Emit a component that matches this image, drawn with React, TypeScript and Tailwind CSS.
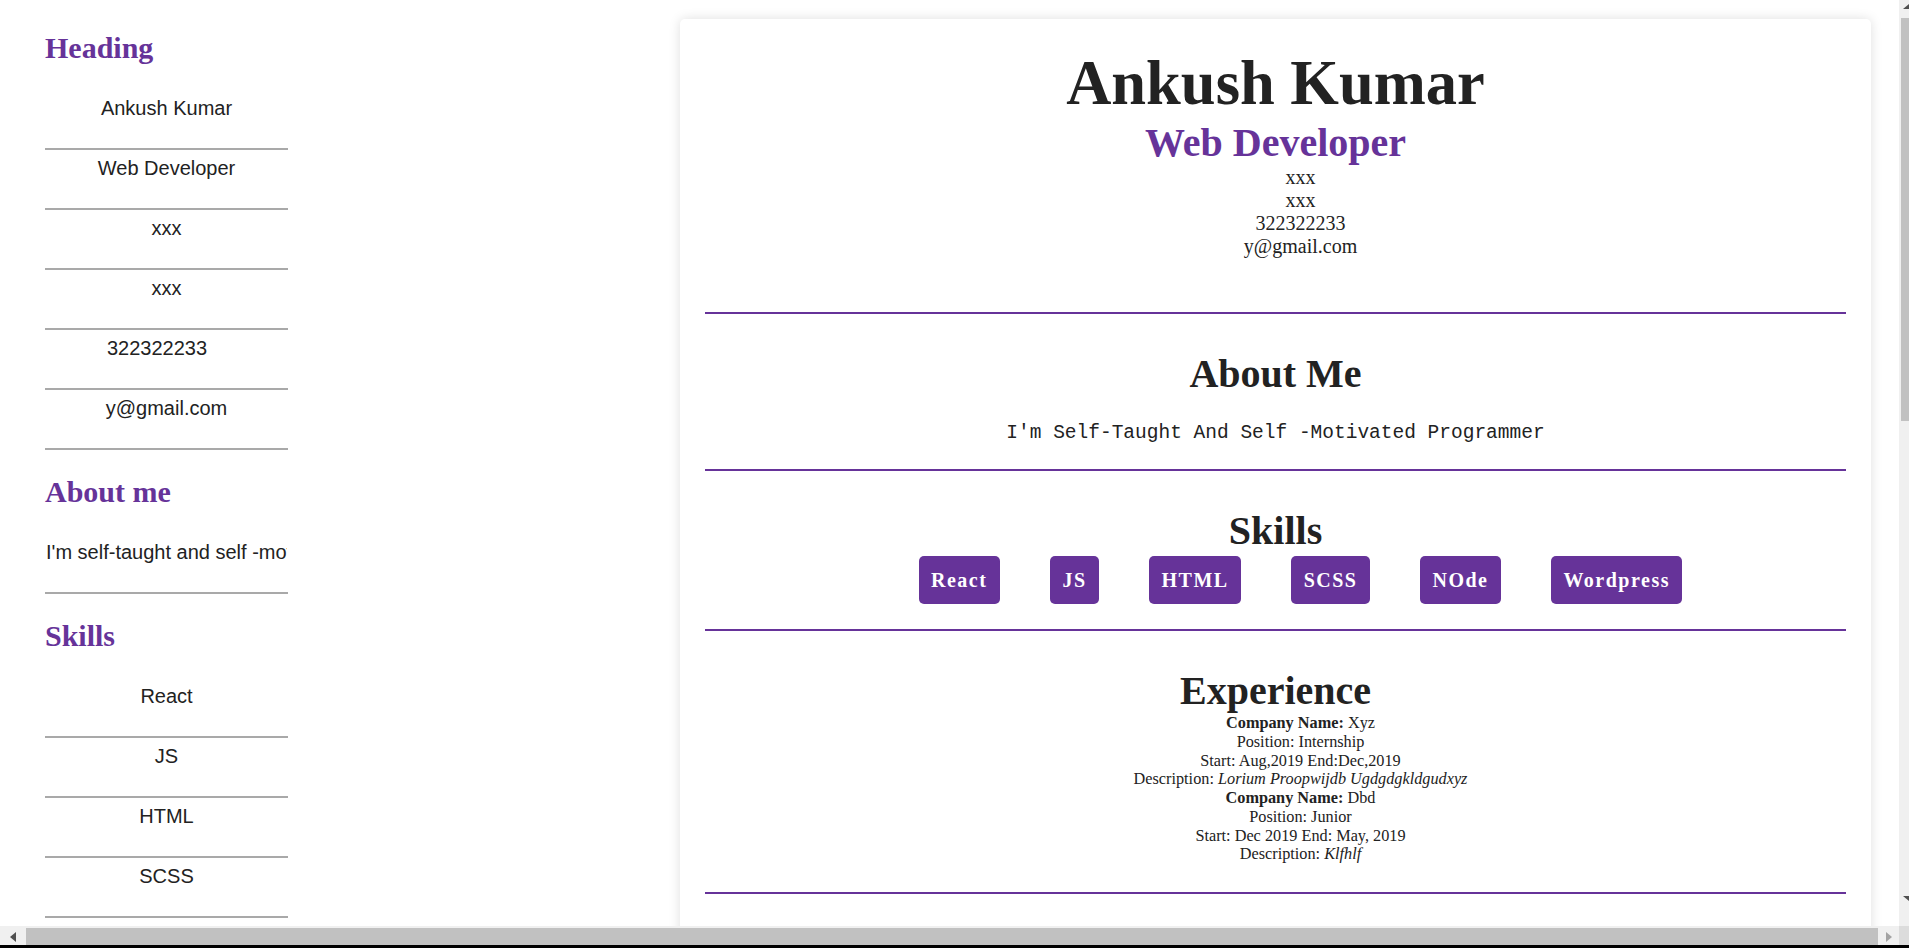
import React from "react";

const serif = { fontFamily: '"Liberation Serif", "Times New Roman", serif' };

const CONTACT = ["Ankush Kumar", "Web Developer", "xxx", "xxx", "322322233", "y@gmail.com"];
const SKILLS = ["React", "JS", "HTML", "SCSS", "NOde", "Wordpress"];

function SideHeading({ children }: { children: React.ReactNode }) {
  return (
    <h2 className="mt-[25px] mb-[25px] text-[30px] leading-[34px] font-bold text-[#663399] first:mt-0 font-['Liberation_Serif',serif]">
      {children}
    </h2>
  );
}

function Field({ value, shift }: { value: string; shift?: boolean }) {
  return (
    <input
      readOnly
      value={value}
      className={
        "block w-full h-[60px] pt-[7px] pb-[28px] border-0 border-b-2 border-[#a9a9a9] bg-transparent text-center text-[20px] leading-[23px] text-[#222] outline-none font-['Liberation_Sans',Arial,sans-serif] " +
        (shift ? "pl-0 pr-[19px]" : "px-[1px]")
      }
    />
  );
}

function Section({ title, children, pb = "pb-[25px]" }: { title: string; children: React.ReactNode; pb?: string }) {
  return (
    <>
      <div className={"pt-[37px] text-center " + pb}>
        <h2 className="text-[40px] leading-[46px] font-bold text-[#222]">{title}</h2>
        {children}
      </div>
      <div className="h-[2px] bg-[#663399]" />
    </>
  );
}

function Resume() {
  return (
    <div
      className="ml-[392px] mt-[19px] w-[1191px] shrink-0 rounded-[5px] bg-white px-[25px] pb-[200px] shadow-[0_0_12px_rgba(0,0,0,0.13)]"
      style={serif}
    >
      <div className="pt-[28px] pb-[54px] text-center text-[#222]">
        <h1 className="text-[62.5px] leading-[73px] font-bold">Ankush Kumar</h1>
        <h2 className="text-[40px] leading-[46px] font-bold text-[#663399]">Web Developer</h2>
        <ul className="pl-[50px] text-[20px] leading-[23px]">
          <li>xxx</li>
          <li>xxx</li>
          <li>322322233</li>
          <li>y@gmail.com</li>
        </ul>
      </div>
      <div className="h-[2px] bg-[#663399]" />

      <Section title="About Me">
        <p className="mt-[25px] text-[19.5px] leading-[22px] text-[#222] font-['Liberation_Mono',monospace]">
          I'm Self-Taught And Self -Motivated Programmer
        </p>
      </Section>

      <Section title="Skills">
        <ul className="mt-[2px] flex justify-center">
          {SKILLS.map((s) => (
            <li
              key={s}
              className="ml-[50px] rounded-[5px] bg-[#663399] px-[12.5px] py-[12.5px] text-[20px] leading-[23px] font-bold tracking-[1.5px] text-white"
            >
              {s}
            </li>
          ))}
        </ul>
      </Section>

      <Section title="Experience" pb="pb-[28px]">
        <ul className="pl-[50px] text-[16.25px] leading-[18.75px] text-[#222]">
          <li>
            <b>Company Name:</b> Xyz
          </li>
          <li>Position: Internship</li>
          <li>Start: Aug,2019 End:Dec,2019</li>
          <li>
            Description: <i>Lorium Proopwijdb Ugdgdgkldgudxyz</i>
          </li>
          <li>
            <b>Company Name:</b> Dbd
          </li>
          <li>Position: Junior</li>
          <li>Start: Dec 2019 End: May, 2019</li>
          <li>
            Description: <i>Klfhlf</i>
          </li>
        </ul>
      </Section>
    </div>
  );
}

function Editor() {
  return (
    <div className="w-[243px] shrink-0 pt-[31px]">
      <SideHeading>Heading</SideHeading>
      {CONTACT.map((v, i) => (
        <Field key={i} value={v} shift={v === "322322233"} />
      ))}
      <SideHeading>About me</SideHeading>
      <Field value="I'm self-taught and self -motivated programmer" />
      <SideHeading>Skills</SideHeading>
      {SKILLS.slice(0, 4).map((s) => (
        <Field key={s} value={s} />
      ))}
    </div>
  );
}

export default function App() {
  return (
    <div className="flex h-[948px] w-[1909px] flex-col overflow-hidden bg-white">
      <div className="flex h-[926px] shrink-0">
        <div className="flex w-[1899px] shrink-0 items-start overflow-hidden pl-[45px]">
          <Editor />
          <Resume />
        </div>
        {/* vertical scrollbar */}
        <div className="flex w-[10px] shrink-0 flex-col bg-[#f0f0f0]">
          <div className="flex h-[18px] items-start justify-end pt-[4px]">
            <svg width="6" height="5" viewBox="0 0 6 5">
              <polygon points="6,0 6,5 0,5" fill="#505050" />
            </svg>
          </div>
          <div className="ml-[2px] h-[403px] bg-[#c1c1c1]" />
          <div className="flex-1" />
          <div className="flex h-[30px] items-start justify-end">
            <svg width="6" height="5" viewBox="0 0 6 5">
              <polygon points="0,0 6,0 6,5" fill="#505050" />
            </svg>
          </div>
        </div>
      </div>
      {/* horizontal scrollbar */}
      <div className="flex h-[19px] shrink-0 bg-[#f0f0f0]">
        <div className="flex w-[26px] items-center justify-center pt-[2px]">
          <svg width="6" height="10" viewBox="0 0 6 10">
            <polygon points="6,0 6,10 0,5" fill="#505050" />
          </svg>
        </div>
        <div className="mt-[2px] h-[17px] flex-1 bg-[#c1c1c1]" />
        <div className="flex w-[21px] items-center justify-center pt-[2px]">
          <svg width="6" height="10" viewBox="0 0 6 10">
            <polygon points="0,0 6,5 0,10" fill="#a3a3a3" />
          </svg>
        </div>
        <div className="w-[10px] bg-[#dcdcdc]" />
      </div>
      <div className="h-[3px] shrink-0 bg-black" />
    </div>
  );
}
